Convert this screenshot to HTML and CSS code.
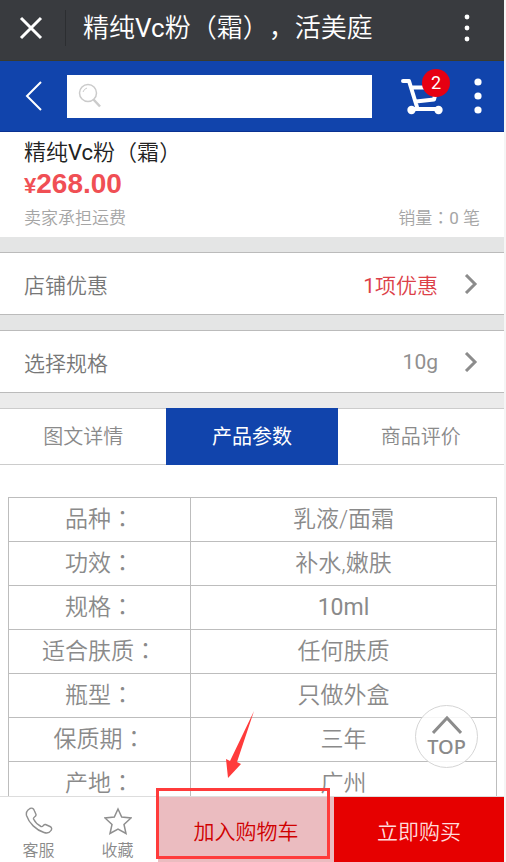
FILE: index.html
```html
<!DOCTYPE html>
<html lang="zh-CN">
<head>
<meta charset="utf-8">
<meta name="viewport" content="width=device-width, initial-scale=1">
<title>精纯Vc粉（霜），活美庭</title>
<link rel="stylesheet" href="styles.css">
</head>
<body>
<div class="app">
  <header class="titlebar">
    <button class="icon-btn close" aria-label="关闭"><svg width="24" height="24" viewBox="0 0 24 24"><path d="M2 2L22 22M22 2L2 22" fill="none" stroke="#fff" stroke-width="3"/></svg></button>
    <h1 class="page-title">精纯<span class="latin">Vc</span>粉<span class="mark" lang="zh-TW">（</span>霜<span class="mark" lang="zh-TW">）</span>，活美庭</h1>
    <button class="icon-btn" aria-label="更多"><svg width="6" height="28" viewBox="0 0 6 28"><g fill="#fff"><circle cx="3" cy="3" r="2.4"/><circle cx="3" cy="14" r="2.4"/><circle cx="3" cy="25" r="2.4"/></g></svg></button>
  </header>
  <div class="navbar">
    <button class="icon-btn back" aria-label="返回"><svg width="18" height="30" viewBox="0 0 18 30"><path d="M16 1L2 15L16 29" fill="none" stroke="#fff" stroke-width="2"/></svg></button>
    <form class="search">
      <svg width="24" height="26" viewBox="0 0 24 26" fill="none" stroke="#cbcbcb"><circle cx="10" cy="10" r="8.5" stroke-width="1.5"/><path d="M5 9A6 6 0 0 1 9 5" stroke-width="1"/><path d="M15.500 16.500L22 23.500" stroke-width="2.500"/></svg>
      <input type="search" aria-label="搜索">
    </form>
    <button class="icon-btn cart" aria-label="购物车"><svg width="44" height="38" viewBox="0 0 44 38" fill="none" stroke="#fff" stroke-width="4" stroke-linecap="round" stroke-linejoin="round"><path d="M3 4H9L17 30M12 10.500H37L34 22.500L16 24.500"/><path d="M11 32H38"/><circle cx="11.500" cy="33" r="4.200" fill="#fff" stroke="none"/><circle cx="38.500" cy="33" r="4.200" fill="#fff" stroke="none"/></svg><span class="badge">2</span></button>
    <button class="icon-btn menu" aria-label="菜单"><svg width="8" height="36" viewBox="0 0 8 36"><g fill="#fff"><circle cx="4" cy="4" r="3.600"/><circle cx="4" cy="18" r="3.600"/><circle cx="4" cy="32" r="3.600"/></g></svg></button>
  </div>
  <main class="content">
    <section class="product">
      <h2 class="name">精纯<span class="latin">Vc</span>粉<span class="mark" lang="zh-TW">（</span>霜<span class="mark" lang="zh-TW">）</span></h2>
      <p class="price"><span class="yen">¥</span>268.00</p>
      <p class="meta"><span>卖家承担运费</span><span>销量<span class="mark" lang="zh-TW">：</span><span class="latin">0</span> 笔</span></p>
    </section>
    <a class="row" href="#offers"><span>店铺优惠</span><span class="value offer"><span class="latin">1</span>项优惠</span><svg width="14" height="20" viewBox="0 0 14 20"><path d="M2 1L11 10L2 19" fill="none" stroke="#8c8c8c" stroke-width="3"/></svg></a>
    <a class="row" href="#spec"><span>选择规格</span><span class="value latin">10g</span><svg width="14" height="20" viewBox="0 0 14 20"><path d="M2 1L11 10L2 19" fill="none" stroke="#8c8c8c" stroke-width="3"/></svg></a>
    <nav class="tabs">
      <a href="#detail">图文详情</a>
      <a href="#params" class="active">产品参数</a>
      <a href="#reviews">商品评价</a>
    </nav>
    <table class="params" id="params">
      <tr><th scope="row">品种<span class="mark" lang="zh-TW">：</span></th><td>乳液/面霜</td></tr>
      <tr><th scope="row">功效<span class="mark" lang="zh-TW">：</span></th><td>补水,嫩肤</td></tr>
      <tr><th scope="row">规格<span class="mark" lang="zh-TW">：</span></th><td><span class="latin">10ml</span></td></tr>
      <tr><th scope="row">适合肤质<span class="mark" lang="zh-TW">：</span></th><td>任何肤质</td></tr>
      <tr><th scope="row">瓶型<span class="mark" lang="zh-TW">：</span></th><td>只做外盒</td></tr>
      <tr><th scope="row">保质期<span class="mark" lang="zh-TW">：</span></th><td>三年</td></tr>
      <tr><th scope="row">产地<span class="mark" lang="zh-TW">：</span></th><td>广州</td></tr>
    </table>
  </main>
  <footer class="actions">
    <button class="tool"><svg width="28" height="28" viewBox="0 0 28 28" fill="none" stroke="#8f8f8f" stroke-width="1.400" stroke-linejoin="round"><path d="M3 3L5 1.500C7 .5 8.500 1.500 9.500 4L11 7.500C11.500 10 8 9.500 8.500 12C10 15 13 18 16 19.500C18.500 20.500 18 17 20.500 17.500L25 19.500C27 20.500 27 22 26 23.500C24.500 26 22 26.500 19 25.500C11 23 4 16 1.500 8.500C1 6 1.500 4.500 3 3Z"/></svg><span>客服</span></button>
    <button class="tool"><svg width="28" height="28" viewBox="0 0 28 28" fill="none" stroke="#8f8f8f" stroke-width="1.500"><path d="M14 2L17.700 10L27 11L20 17.500L22 26.500L14 22L6 26.500L8 17.500L1 11L10.300 10Z"/></svg><span>收藏</span></button>
    <button class="add">加入购物车</button>
    <button class="buy">立即购买</button>
    <div class="highlight"></div>
    <svg class="arrow" width="30" height="70" viewBox="0 0 30 70"><path d="M29 1L12 52L16 54L3 68L1 49L5 51Z" fill="#ff3b3b"/></svg>
    <a class="top" href="#" aria-label="回到顶部"><svg width="30" height="20" viewBox="0 0 30 20"><path d="M1 18L15 3L29 18" fill="none" stroke="#8c8c8c" stroke-width="3"/></svg><span>TOP</span></a>
  </footer>
</div>
</body>
</html>
```

FILE: styles.css
```css
* { box-sizing: border-box; }
body {
  margin: 0;
  padding-right: 2px;
  background: #f5f5f5;
  color: #8a8a8a;
  font-family: Roboto, "Noto Sans CJK SC", sans-serif;
  font-weight: 350;
  text-spacing-trim: space-all;
}
h1, h2, p { margin: 0; font-weight: 350; }
a { color: inherit; text-decoration: none; }
button { border: 0; padding: 0; background: none; font: inherit; color: inherit; }
svg { display: block; flex: none; }
.mark { font-family: "Noto Sans CJK TC", sans-serif; line-height: 1; }
.latin { font-weight: 400; }
.app { display: flex; flex-direction: column; height: 100vh; background: #fff; }
.icon-btn { flex: none; display: flex; align-items: center; justify-content: center; }

.titlebar {
  display: flex;
  align-items: center;
  height: 61px;
  padding: 0 34px 5px 0;
  background: #393b3f;
  border-bottom: 1px solid #3a3b2e;
  color: #fff;
  flex: none;
}
.close { width: 66px; height: 36px; padding-right: 4px; border-right: 1px solid #2c2e31; }
.page-title { flex: 1; padding-left: 17px; font-size: 26px; line-height: 36px; white-space: nowrap; }

.navbar {
  display: flex;
  align-items: center;
  height: 71px;
  padding-right: 22px;
  background: #1144ac;
  border-bottom: 1px solid #0a3191;
  flex: none;
}
.back { width: 67px; }
.search { flex: 1; display: flex; align-items: center; height: 43px; padding-left: 11px; background: #fff; }
.search input { flex: 1; min-width: 0; height: 100%; border: 0; outline: 0; background: none; font: inherit; font-size: 20px; }
.cart { position: relative; margin: 0 30px 0 28px; }
.badge {
  position: absolute;
  top: -8px;
  right: -6px;
  width: 28px;
  height: 28px;
  border-radius: 50%;
  background: #e60012;
  color: #fff;
  font-size: 18px;
  font-weight: 400;
  line-height: 28px;
  text-align: center;
}

.content { flex: 1; min-height: 0; overflow-y: auto; scrollbar-width: none; }
.product { padding: 6px 24px; }
.name { color: #222; font-size: 22px; line-height: 30px; }
.price { color: #f04f54; font: bold 28px/32px "Liberation Sans", sans-serif; }
.yen { font-size: 22px; }
.meta { display: flex; justify-content: space-between; align-items: baseline; padding-top: 4px; color: #a5a5a5; font-size: 17px; line-height: 25px; }
.row {
  display: flex;
  align-items: center;
  height: 78px;
  padding: 0 26px 0 24px;
  border-top: 15px solid #e4e5e5;
  box-shadow: inset 0 1px #bbb, inset 0 -1px #bbb;
  color: #777;
  font-size: 21px;
}
.value { margin-left: auto; margin-right: 26px; color: #909090; }
.offer { color: #dc4048; }
.tabs { display: grid; grid-template-columns: 33fr 34fr 33fr; border-top: 15px solid #ebebeb; font-size: 20px; text-align: center; }
.tabs a { height: 57px; line-height: 56px; border: solid #ccc; border-width: 1px 0; }
.tabs .active { background: #1144ac; border-color: #1144ac; color: #fff; font-weight: 400; }
.params { width: calc(100% - 15px); margin: 32px 7px 0 8px; border-collapse: collapse; table-layout: fixed; font-size: 23px; text-align: center; }
.params th, .params td { height: 44px; padding: 0; border: 1px solid #bdbdbd; font-weight: 350; line-height: 32px; }
.params th { width: 182px; }

.actions { position: relative; flex: none; display: grid; grid-template-columns: 77px 81px 176px 1fr; height: 66px; border-top: 1px solid #ddd; }
.tool { display: flex; flex-direction: column; align-items: center; padding-top: 10px; gap: 4px; font-size: 16px; line-height: 24px; }
.add { background: #ebbcc0; color: #d00000; font-size: 21px; }
.buy { background: #e60000; color: #ffdcdc; font-size: 21px; }
.highlight { position: absolute; left: 156px; top: -9px; width: 174px; height: 71px; border: 3px solid #ff3b3b; }
.arrow { position: absolute; left: 225px; top: -87px; }
.top {
  position: absolute;
  right: 26px;
  bottom: 94px;
  width: 63px;
  height: 63px;
  padding-top: 9px;
  border: 1px solid #d5d5d5;
  border-radius: 50%;
  background: rgba(255, 255, 255, .85);
  display: flex;
  flex-direction: column;
  align-items: center;
  font: 500 20px/24px "Noto Sans", sans-serif;
}
```
